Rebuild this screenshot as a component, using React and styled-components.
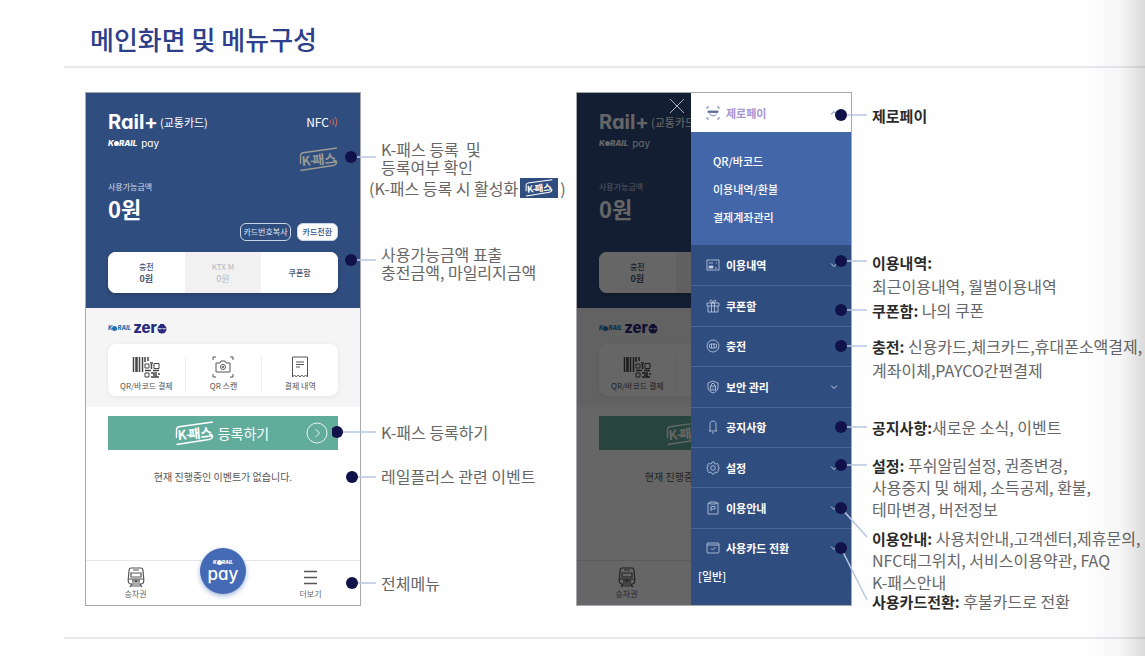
import React from 'react'
import styled, { createGlobalStyle } from 'styled-components'

const dots = {
    main: [
        { x: 19, y: 65 },
        { x: 19, y: 168 },
        { x: 5, y: 340 },
        { x: 20, y: 385 },
        { x: 20, y: 491 },
    ],
    menu: [
        { x: 18, y: 23 },
        { x: 18, y: 169 },
        { x: 18, y: 218 },
        { x: 18, y: 254 },
        { x: 18, y: 335 },
        { x: 18, y: 373 },
        { x: 18, y: 416, endY: 445 },
        { x: 18, y: 456, endY: 508 },
    ],
}

const menuItems = [
    { label: '이용내역', icon: 'history', arrow: true },
    { label: '쿠폰함', icon: 'gift' },
    { label: '충전', icon: 'charge' },
    { label: '보안 관리', icon: 'shield', arrow: true },
    { label: '공지사항', icon: 'bell' },
    { label: '설정', icon: 'gear', arrow: true },
    { label: '이용안내', icon: 'guide', arrow: true },
    { label: '사용카드 전환', icon: 'card', arrow: true },
]

const icons = {
    zero: (
        <>
            <path d="M1 3V1h2M11 1h2v2M1 11v2h2M11 13h2v-2" />
            <path d="M2 5h10v1.500H2z" fill="currentColor" />
            <path d="M3.500 7.500c.5 3 6.500 3 7 0" />
        </>
    ),
    history: (
        <>
            <rect x="1" y="2" width="12" height="10" />
            <path d="M3 5h4M10 5h1" />
            <path d="M3 8h4v2H3z" fill="currentColor" />
            <path d="M9 10h2" />
        </>
    ),
    gift: (
        <>
            <path d="M1 4h12v3H1zM2 7v6h10V7M5.500 4v9M8.500 4v9" />
            <path d="M7 4C4 4 3.500 1 5 1s2 3 2 3 .5-3 2-3 1 3-2 3z" />
        </>
    ),
    charge: (
        <>
            <circle cx="7" cy="7" r="6" />
            <rect x="3.500" y="5" width="7" height="4" rx="1" />
            <path d="M5.500 5v4M8 5v4" />
        </>
    ),
    shield: (
        <>
            <path d="M7 1l5 2v4c0 3-2 5-5 6-3-1-5-3-5-6V3z" />
            <rect x="4.500" y="6" width="5" height="4" />
            <path d="M5.500 6V4.500c0-1.500 3-1.500 3 0V6M7 7.500v1" />
        </>
    ),
    bell: (
        <>
            <path d="M4 10V4c0-4 6-4 6 0v6l1 1H3z" />
            <path d="M6 13h2" />
        </>
    ),
    gear: (
        <>
            <path d="M6 1h2l.5 1.500 1.500.6L11.400 2.400l1 1.300-.5 1.500L13 6v2l-1.200.8.4 1.600-1 1.300-1.500-.6-1.200.6L8 13H6l-.5-1.300-1.200-.6-1.500.6-1-1.300.4-1.600L1 8V6l1.100-.8-.5-1.500 1-1.300 1.400.7 1.500-.6z" />
            <circle cx="7" cy="7" r="2.300" />
        </>
    ),
    guide: (
        <>
            <path d="M4 2H2v11h10V2h-2M4 1h6v2H4z" />
            <path d="M5 10V5.500h4V8H5" />
        </>
    ),
    card: (
        <>
            <rect x="1" y="2" width="12" height="10" rx="1" />
            <path d="M1 4h12M5 7.500L6.500 9 9.500 6" />
        </>
    ),
}

function MenuIcon({ name }) {
    return (
        <svg width="14" height="14" viewBox="0 0 14 14" fill="none" stroke="currentColor" strokeWidth="0.8" aria-hidden="true">
            {icons[name]}
        </svg>
    )
}

function Chevron({ up }) {
    return (
        <svg width="8" height="8" viewBox="0 0 8 8" fill="none" stroke="currentColor" aria-hidden="true">
            <path d={up ? 'M1 5.500l3-3 3 3' : 'M1 2.500l3 3 3-3'} />
        </svg>
    )
}

function KPass({ color, width = 39, height = 25 }) {
    return (
        <svg width={width} height={height} viewBox="0 0 39 25" fill="none" stroke={color} strokeWidth="1.400" role="img" aria-label="K-패스">
            <path d="M1.500 17V8.500C1.500 6.500 2.500 6 4 5.700L38 1" />
            <path d="M1.500 23.500L34 18.500c4-.6 4.500-4 2-5l-2-.5" />
            <g fill={color} stroke="none" transform="rotate(-5 3 19)" fontFamily="'Noto Sans CJK KR', sans-serif" fontWeight="700">
                <text x="3" y="19" fontSize="13">K-</text>
                <text x="14" y="19" fontSize="13">패스</text>
            </g>
        </svg>
    )
}

function KorailPay() {
    return (
        <KorailLine>
            <Korail>K<KorailO />RAIL</Korail>
            <PayWord>pay</PayWord>
        </KorailLine>
    )
}

function AppScreen() {
    return (
        <Screen>
            <Wallet>
                <BrandRow>
                    <Brand>
                        <RailLogo>Rail+</RailLogo>
                        <BrandNote>(교통카드)</BrandNote>
                    </Brand>
                    <Nfc>
                        NFC
                        <svg width="9" height="12" viewBox="0 0 9 12" fill="none" stroke="#b0665a" strokeWidth="1.300" aria-hidden="true">
                            <path d="M1 4.500q1 1.500 0 3M3.500 3q2 3 0 6M6 1q3.500 5 0 10" />
                        </svg>
                    </Nfc>
                </BrandRow>
                <PassRow>
                    <KorailPay />
                    <KPass color="#9a9a90" />
                </PassRow>
                <BalanceLabel>사용가능금액</BalanceLabel>
                <Balance>0원</Balance>
                <PillRow>
                    <Pill>카드번호복사</Pill>
                    <Pill $solid>카드전환</Pill>
                </PillRow>
                <Amounts>
                    <Amount><span>충전</span><b>0원</b></Amount>
                    <Amount $muted><span>KTX M</span><b>0원</b></Amount>
                    <Amount><span>쿠폰함</span></Amount>
                </Amounts>
            </Wallet>
            <Zero>
                <ZeroBrand>
                    <Korail $blue>K<KorailO />RAIL</Korail>
                    <ZeroWord>
                        zer
                        <svg width="10" height="12" viewBox="0 0 10 12" role="img" aria-label="o">
                            <circle cx="5" cy="7" r="4.500" fill="#2b2a7c" />
                            <path d="M3 2h4v3H3z" fill="#2b2a7c" />
                            <path d="M1.500 6.500q1.500 1 3 0M5.500 6.500q1.500 1 3 0" stroke="#fff" fill="none" />
                        </svg>
                    </ZeroWord>
                </ZeroBrand>
                <QuickMenu>
                    <Quick>
                        <svg width="28" height="22" viewBox="0 0 28 22" fill="none" stroke="#444" aria-hidden="true">
                            <path d="M1.500 1v15M7.500 1v15" strokeWidth="1.500" />
                            <path d="M4.500 1v15" strokeWidth="2.500" />
                            <path d="M10.500 1v15M13 1v5M16 1v4" strokeWidth="1.500" />
                            <path d="M13 8h4v4h-4zM22 7.500h5v5h-5zM13 17h4v4h-4z" />
                            <path d="M18 7h3M19.500 8v5M13 14.500h6M21 14.500h6M19 17h3v3M24 16v5M26 18h2M19 21h8" strokeWidth="1.500" />
                        </svg>
                        <span>QR/바코드 결제</span>
                    </Quick>
                    <Quick>
                        <svg width="22" height="22" viewBox="0 0 22 22" fill="none" stroke="#555" aria-hidden="true">
                            <path d="M1 4V1h3M18 1h3v3M1 18v3h3M18 21h3v-3" />
                            <path d="M4 7h4l1-2h4l1 2h4v9H4z" />
                            <circle cx="11" cy="11" r="2.500" />
                            <path d="M11 10v2M10 11h2" />
                        </svg>
                        <span>QR 스캔</span>
                    </Quick>
                    <Quick>
                        <svg width="18" height="22" viewBox="0 0 18 22" fill="none" stroke="#555" aria-hidden="true">
                            <path d="M1.500 1h15v20l-2-2-1.800 2-1.900-2L9 21l-1.800-2-1.900 2-1.800-2-2 2z" />
                            <path d="M5 6h8M5 8.500h8M5 11h4" />
                        </svg>
                        <span>결제 내역</span>
                    </Quick>
                </QuickMenu>
            </Zero>
            <Events>
                <Register>
                    <RegisterText>
                        <KPass color="#fff" />
                        <span>등록하기</span>
                    </RegisterText>
                    <svg width="22" height="22" viewBox="0 0 22 22" fill="none" stroke="#e6f3ef" aria-hidden="true">
                        <circle cx="11" cy="11" r="10" />
                        <path d="M9.500 7l4 4-4 4" />
                    </svg>
                </Register>
                <Empty>현재 진행중인 이벤트가 없습니다.</Empty>
            </Events>
            <TabBar>
                <Tab>
                    <svg width="18" height="21" viewBox="0 0 18 21" fill="none" stroke="#555" strokeWidth="1.200" aria-hidden="true">
                        <path d="M4 1h10q2 0 2 3l.8 9q0 4-3 4H4.200q-3 0-3-4L2 4q0-3 2-3z" />
                        <path d="M6 3h6M4 6h10v4H4zM2 12h14M6 12v4M12 12v4M4 19h10M5 17l-2 3M13 17l2 3" />
                        <path d="M8 13h2v2H8z" fill="#555" />
                    </svg>
                    승차권
                </Tab>
                <PayButton>
                    <Korail>K<KorailO />RAIL</Korail>
                    <span>pay</span>
                </PayButton>
                <Tab>
                    <svg width="13" height="21" viewBox="0 0 13 21" stroke="#555" strokeWidth="1.300" aria-hidden="true">
                        <path d="M0 4.500h13M0 10.500h13M0 16.500h13" />
                    </svg>
                    더보기
                </Tab>
            </TabBar>
        </Screen>
    )
}

function Drawer() {
    return (
        <DrawerPanel>
            <MenuButton $open>
                <MenuIcon name="zero" />
                <span>제로페이</span>
                <Chevron up />
            </MenuButton>
            <SubMenu>
                <a href="#qr">QR/바코드</a>
                <a href="#refund">이용내역/환불</a>
                <a href="#account">결제계좌관리</a>
            </SubMenu>
            <MenuList>
                {menuItems.map((item) => (
                    <li key={item.label}>
                        <MenuButton>
                            <MenuIcon name={item.icon} />
                            <span>{item.label}</span>
                            {item.arrow && <Chevron />}
                        </MenuButton>
                    </li>
                ))}
            </MenuList>
            <CardType>[일반]</CardType>
        </DrawerPanel>
    )
}

function Leaders({ points, end }) {
    return (
        <LeaderLayer width="60" height="514" viewBox="0 0 60 514" aria-hidden="true">
            {points.map((p) => (
                <g key={p.y}>
                    <path d={`M${p.x} ${p.y}L${end} ${p.endY || p.y}`} stroke="#b7c6e0" strokeWidth="1.500" />
                    <circle cx={p.x} cy={p.y} r="6" fill="#11124a" />
                </g>
            ))}
        </LeaderLayer>
    )
}

function App() {
    return (
        <Page>
            <GlobalStyle />
            <Title>메인화면 및 메뉴구성</Title>
            <Board>
                <Phone>
                    <AppScreen />
                </Phone>
                <Notes>
                    <Leaders points={dots.main} end={44} />
                    <Note $gap={48} $leading={18}>
                        K-패스 등록&nbsp; 및<br />
                        등록여부 확인
                    </Note>
                    <Note $gap={0} $leading={24} $wide>
                        (K-패스 등록 시 활성화
                        <PassBadge><KPass color="#fff" width={28} height={18} /></PassBadge>
                        )
                    </Note>
                    <Note $gap={45} $leading={18}>
                        사용가능금액 표출<br />
                        충전금액, 마일리지금액
                    </Note>
                    <Note $gap={139} $leading={24}>K-패스 등록하기</Note>
                    <Note $gap={20} $leading={24}>레일플러스 관련 이벤트</Note>
                    <Note $gap={83} $leading={24}>전체메뉴</Note>
                </Notes>
                <Phone>
                    <Behind inert>
                        <AppScreen />
                        <Dim />
                    </Behind>
                    <Close aria-label="닫기">
                        <svg width="14" height="14" viewBox="0 0 14 14" stroke="#a9b1bc" aria-hidden="true">
                            <path d="M0 0l14 14M14 0L0 14" />
                        </svg>
                    </Close>
                    <Drawer />
                </Phone>
                <Notes>
                    <Leaders points={dots.menu} end={44} />
                    <Note $gap={11} $leading={24}><b>제로페이</b></Note>
                    <Note $gap={123} $leading={24}>
                        <b>이용내역:</b><br />
                        최근이용내역, 월별이용내역
                    </Note>
                    <Note $gap={0} $leading={24}><b>쿠폰함:</b> 나의 쿠폰</Note>
                    <Note $gap={12} $leading={24}>
                        <b>충전:</b> 신용카드,체크카드,휴대폰소액결제,<br />
                        계좌이체,PAYCO간편결제
                    </Note>
                    <Note $gap={33} $leading={24}><b>공지사항:</b>새로운 소식, 이벤트</Note>
                    <Note $gap={15} $leading={22}>
                        <b>설정:</b> 푸쉬알림설정, 권종변경,<br />
                        사용중지 및 해제, 소득공제, 환불,<br />
                        테마변경, 버전정보
                    </Note>
                    <Note $gap={7} $leading={22}>
                        <b>이용안내:</b> 사용처안내,고객센터,제휴문의,<br />
                        NFC태그위치, 서비스이용약관, FAQ<br />
                        K-패스안내
                    </Note>
                    <Note $gap={0} $leading={16}><b>사용카드전환:</b> 후불카드로 전환</Note>
                </Notes>
            </Board>
            <EdgeShade />
        </Page>
    )
}
export default App

const GlobalStyle = createGlobalStyle`
* {
    box-sizing: border-box;
}

body {
    margin: 0;
    background: #fefefe;
    font-family: 'Noto Sans CJK KR', sans-serif;
}

button {
    margin: 0;
    padding: 0;
    border: 0;
    background: none;
    color: inherit;
    font: inherit;
    cursor: pointer;
}

a {
    color: inherit;
    text-decoration: none;
}

svg {
    display: block;
    flex: none;
}
`

const Page = styled.main`
    position: relative;
    padding: 12px 0 18px 64px;
    overflow: hidden;
`

const Title = styled.h1`
    margin: 0;
    padding: 0 26px;
    color: #2d3f8b;
    font-size: 26px;
    font-weight: 500;
    line-height: 54px;
    border-bottom: 2px solid #e9e9eb;
`

const Board = styled.section`
    display: grid;
    grid-template-columns: 276px 215px 276px 1fr;
    padding: 24px 0 28px 21px;
    border-bottom: 2px solid #e9e9eb;
`

const Phone = styled.article`
    position: relative;
    height: 514px;
    border: 1px solid #a6a8ab;
    background: #fff;
`

const Screen = styled.div`
    display: flex;
    flex-direction: column;
    width: 274px;
    height: 100%;
`

const Wallet = styled.header`
    display: flex;
    flex-direction: column;
    height: 215px;
    padding: 16px 22px 0;
    background: #304d7f;
    color: #fff;
`

const BrandRow = styled.div`
    display: flex;
    align-items: center;
    justify-content: space-between;
    height: 26px;
`

const Brand = styled.div`
    display: flex;
    align-items: center;
    gap: 2px;
`

const RailLogo = styled.strong`
    font-family: Inter, sans-serif;
    font-feature-settings: 'cv11';
    font-size: 20px;
    font-weight: 700;
    line-height: 26px;
`

const BrandNote = styled.span`
    font-size: 11px;
    line-height: 26px;
`

const Nfc = styled.span`
    display: flex;
    align-items: center;
    font-size: 12px;
    line-height: 26px;
`

const PassRow = styled.div`
    display: flex;
    justify-content: space-between;
    height: 46px;

    > svg {
        margin-top: 12px;
    }
`

const KorailLine = styled.div`
    display: flex;
    align-items: center;
    gap: 4px;
    height: 16px;
`

const Korail = styled.span`
    display: inline-flex;
    align-items: center;
    color: ${(p) => (p.$blue ? '#2073b4' : 'inherit')};
    font-family: Inter, sans-serif;
    font-size: ${(p) => (p.$blue ? 6 : 8)}px;
    font-style: italic;
    font-weight: 800;
    line-height: 8px;
`

const KorailO = styled.i`
    width: 5px;
    height: 5px;
    border-radius: 50%;
    background: currentColor;
`

const PayWord = styled.span`
    font-family: Inter, sans-serif;
    font-feature-settings: 'cv11';
    font-size: 10px;
    line-height: 12px;
`

const BalanceLabel = styled.span`
    color: #d5dce8;
    font-size: 8px;
    line-height: 12px;
`

const Balance = styled.strong`
    font-size: 22px;
    font-weight: 700;
    line-height: 30px;
`

const PillRow = styled.div`
    display: flex;
    justify-content: flex-end;
    gap: 6px;
`

const Pill = styled.button`
    height: 18px;
    padding: 0 ${(p) => (p.$solid ? 5 : 2)}px;
    border: 1px solid #c9d3e4;
    border-radius: 6px;
    background: ${(p) => (p.$solid ? '#fff' : 'transparent')};
    color: ${(p) => (p.$solid ? '#304d7f' : '#dfe6f1')};
    font-size: 8px;
    font-weight: ${(p) => (p.$solid ? 500 : 400)};
    line-height: 16px;
`

const Amounts = styled.div`
    display: grid;
    grid-template-columns: repeat(3, 1fr);
    height: 41px;
    margin-top: 11px;
    border-radius: 8px;
    background: #fff;
    overflow: hidden;
    box-shadow: 0 2px 4px rgba(0, 0, 0, 0.2);
`

const Amount = styled.button`
    display: flex;
    flex-direction: column;
    align-items: center;
    justify-content: center;
    background: ${(p) => (p.$muted ? '#f1f1f2' : '#fff')};
    color: ${(p) => (p.$muted ? '#b4b8c4' : '#3f5271')};
    font-size: 8px;
    font-weight: ${(p) => (p.$muted ? 400 : 500)};
    line-height: 12px;

    b {
        font-size: 9px;
        font-weight: ${(p) => (p.$muted ? 400 : 700)};
    }
`

const Zero = styled.section`
    height: 99px;
    padding: 12px 22px 0;
    background: #f5f5f5;
`

const ZeroBrand = styled.div`
    display: flex;
    align-items: center;
    gap: 2px;
    height: 16px;
`

const ZeroWord = styled.strong`
    display: flex;
    align-items: center;
    color: #2b2a7c;
    font-family: Inter, sans-serif;
    font-size: 15px;
    font-weight: 800;
    line-height: 16px;
`

const QuickMenu = styled.div`
    display: grid;
    grid-template-columns: repeat(3, 1fr);
    height: 52px;
    margin-top: 8px;
    border-radius: 8px;
    background: #fff;
    box-shadow: 0 1px 4px rgba(0, 0, 0, 0.08);
`

const Quick = styled.button`
    display: flex;
    flex-direction: column;
    align-items: center;
    justify-content: center;
    gap: 2px;
    margin: 12px 0;
    border-left: 1px solid #eee;
    color: #555;
    font-size: 8px;
    line-height: 12px;
    white-space: nowrap;

    &:first-child {
        border-left: 0;
    }
`

const Events = styled.section`
    flex: 1;
    padding: 9px 22px 0;
`

const Register = styled.button`
    display: flex;
    align-items: center;
    width: 100%;
    height: 34px;
    padding: 0 10px;
    background: #62ac9c;
    color: #fff;
    font-size: 14px;
`

const RegisterText = styled.span`
    display: flex;
    flex: 1;
    align-items: center;
    justify-content: center;
    gap: 4px;
    padding-left: 20px;
`

const Empty = styled.p`
    margin: 17px 0 0;
    color: #555;
    font-size: 10px;
    line-height: 20px;
    text-align: center;
`

const TabBar = styled.nav`
    display: grid;
    grid-template-columns: 1fr 76px 1fr;
    height: 45px;
    border-top: 1px solid #e6e6e6;
`

const Tab = styled.button`
    display: flex;
    flex-direction: column;
    align-items: center;
    justify-content: center;
    color: #666;
    font-size: 8px;
    line-height: 12px;
`

const PayButton = styled.button`
    display: flex;
    flex-direction: column;
    align-items: center;
    justify-self: center;
    width: 46px;
    height: 46px;
    margin-top: -13px;
    padding-top: 10px;
    border-radius: 50%;
    background: #4469b5;
    color: #fff;
    box-shadow: 0 2px 5px rgba(68, 105, 181, 0.5);

    > ${Korail} {
        font-size: 5px;
        line-height: 8px;
    }

    > span:last-child {
        font-family: Inter, sans-serif;
        font-feature-settings: 'cv11';
        font-size: 17px;
        font-weight: 500;
        line-height: 16px;
    }
`

/* the strip of the main screen left of the open drawer */
const Behind = styled.div`
    position: relative;
    width: 115px;
    height: 100%;
    overflow: hidden;

    ${Nfc},
    ${Pill},
    ${PassRow} > svg,
    ${Amount}:nth-child(n + 2) > *,
    ${Quick}:nth-child(n + 2) > *,
    ${RegisterText} > span,
    ${Register} > svg,
    ${PayButton},
    ${Tab}:last-child {
        visibility: hidden;
    }
`

const Dim = styled.div`
    position: absolute;
    inset: 0;
    background: rgba(0, 0, 0, 0.6);
`

const Close = styled.button`
    position: absolute;
    top: 6px;
    right: 167px;
`

const DrawerPanel = styled.nav`
    position: absolute;
    inset: 0 0 0 auto;
    display: flex;
    flex-direction: column;
    width: 160px;
    background: #304d7f;
    color: #fff;
`

const MenuButton = styled.button`
    display: flex;
    flex: none;
    align-items: center;
    gap: 6px;
    width: 100%;
    height: ${(p) => (p.$open ? '39px' : '100%')};
    padding: 0 13px 0 15px;
    background: ${(p) => (p.$open ? '#fff' : 'transparent')};
    color: ${(p) => (p.$open ? '#5a6f9a' : '#c3cfe3')};
    font-size: 11px;
    font-weight: 700;
    line-height: 16px;
    text-align: left;

    > span {
        flex: 1;
        color: ${(p) => (p.$open ? '#a795d2' : '#fff')};
    }
`

const SubMenu = styled.div`
    display: flex;
    flex: none;
    flex-direction: column;
    height: 113px;
    padding: 15px 22px 0;
    background: #4366a8;
    font-size: 11px;
    font-weight: 500;
    line-height: 28px;
`

const MenuList = styled.ul`
    display: grid;
    flex: 1;
    grid-auto-rows: 1fr;
    margin: 0;
    padding: 0;
    list-style: none;

    li + li {
        border-top: 1px solid #48659a;
    }
`

const CardType = styled.p`
    height: 37px;
    margin: 0;
    padding-left: 7px;
    font-size: 11px;
    font-weight: 500;
    line-height: 16px;
`

const Notes = styled.div`
    position: relative;
    display: flex;
    flex-direction: column;
    min-width: 0;
`

const LeaderLayer = styled.svg`
    position: absolute;
    top: 0;
    left: -29px;
    z-index: 1;
`

const Note = styled.p`
    display: ${(p) => (p.$wide ? 'flex' : 'block')};
    align-items: center;
    margin: ${(p) => p.$gap}px 0 0;
    padding-left: ${(p) => (p.$wide ? 8 : 20)}px;
    color: #666;
    font-size: 16px;
    line-height: ${(p) => p.$leading}px;
    white-space: nowrap;

    b {
        color: #2b2b2b;
        font-size: 15px;
        line-height: 1;
    }
`

const PassBadge = styled.span`
    display: flex;
    align-items: center;
    justify-content: center;
    width: 38px;
    height: 20px;
    margin: 0 2px;
    background: #304d7f;
`

const EdgeShade = styled.div`
    position: absolute;
    inset: 0 0 0 auto;
    width: 60px;
    background: linear-gradient(to right, rgba(0, 0, 0, 0), rgba(0, 0, 0, 0.03) 60%, rgba(0, 0, 0, 0.14));
    pointer-events: none;
`
